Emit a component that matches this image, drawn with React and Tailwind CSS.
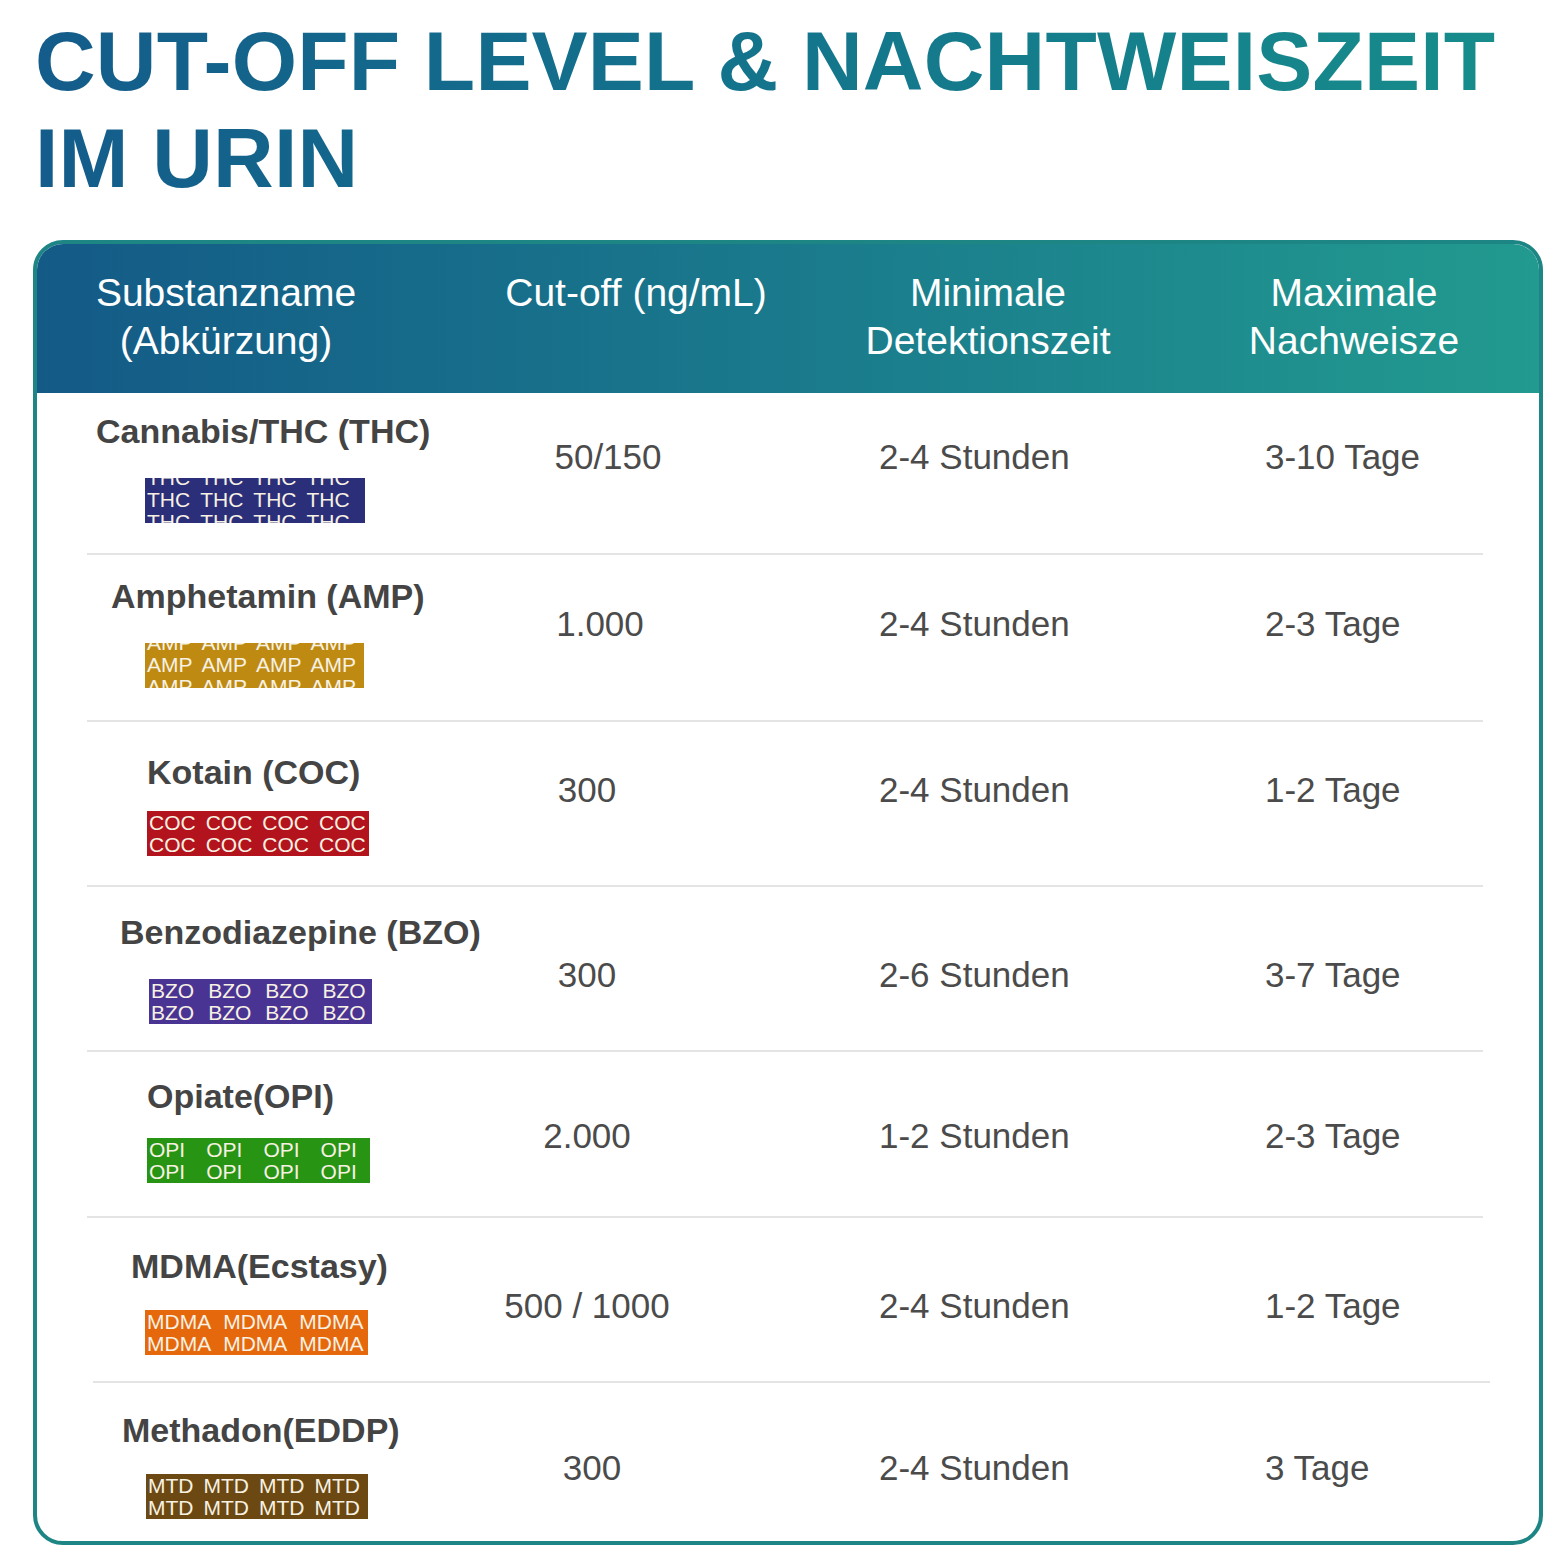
import React from "react";

const rows = [
  {
    name: "Cannabis/THC (THC)", code: "THC", bg: "bg-[#2b2f7a]", clip: true, gap: "gap-x-[10px]", count: 4,
    cut: "50/150", min: "2-4 Stunden", max: "3-10 Tage", cutCls: "pl-[32px]",
    h: "h-[160px]", lp: "pt-[18px]", lm: "ml-[59px]", bm: "mt-[27px] ml-[108px] w-[220px]", vp: "pt-[44px]",
  },
  {
    name: "Amphetamin (AMP)", code: "AMP", bg: "bg-[#bf8a12]", clip: true, gap: "gap-x-[9px]", count: 4,
    cut: "1.000", min: "2-4 Stunden", max: "2-3 Tage", cutCls: "pl-[16px]",
    h: "h-[165px]", lp: "pt-[21px]", lm: "ml-[74px]", bm: "mt-[27px] ml-[108px] w-[219px]", vp: "pt-[49px]",
  },
  {
    name: "Kotain (COC)", code: "COC", bg: "bg-[#b3131c]", clip: false, gap: "gap-x-[10px]", count: 4,
    cut: "300", min: "2-4 Stunden", max: "1-2 Tage", cutCls: "pr-[10px]",
    h: "h-[163px]", lp: "pt-[30px]", lm: "ml-[110px]", bm: "mt-[19px] ml-[110px] w-[222px]", vp: "pt-[48px]",
  },
  {
    name: "Benzodiazepine (BZO)", code: "BZO", bg: "bg-[#4a3493]", clip: false, gap: "gap-x-[14px]", count: 4,
    cut: "300", min: "2-6 Stunden", max: "3-7 Tage", cutCls: "pr-[10px]",
    h: "h-[163px]", lp: "pt-[25px]", lm: "ml-[83px]", bm: "mt-[27px] ml-[112px] w-[223px]", vp: "pt-[68px]",
  },
  {
    name: "Opiate(OPI)", code: "OPI", bg: "bg-[#289414]", clip: false, gap: "gap-x-[21px]", count: 4,
    cut: "2.000", min: "1-2 Stunden", max: "2-3 Tage", cutCls: "pr-[10px]",
    h: "h-[164px]", lp: "pt-[24px]", lm: "ml-[110px]", bm: "mt-[22px] ml-[110px] w-[223px]", vp: "pt-[64px]",
  },
  {
    name: "MDMA(Ecstasy)", code: "MDMA", bg: "bg-[#e6680d]", clip: false, gap: "gap-x-[12px]", count: 3,
    cut: "500 / 1000", min: "2-4 Stunden", max: "1-2 Tage", cutCls: "pr-[10px]",
    h: "h-[163px]", lp: "pt-[28px]", lm: "ml-[94px]", bm: "mt-[24px] ml-[108px] w-[223px]", vp: "pt-[68px]",
  },
  {
    name: "Methadon(EDDP)", code: "MTD", bg: "bg-[#6c4912]", clip: false, gap: "gap-x-[10px]", count: 4,
    cut: "300", min: "2-4 Stunden", max: "3 Tage", cutCls: "",
    h: "h-[158px]", lp: "pt-[27px]", lm: "ml-[85px]", bm: "mt-[24px] ml-[109px] w-[222px]", vp: "pt-[65px]",
  },
];

const seps = ["ml-[50px] mr-[56px]", "ml-[50px] mr-[56px]", "ml-[50px] mr-[56px]", "ml-[50px] mr-[56px]", "ml-[50px] mr-[56px]", "ml-[56px] mr-[49px]"];

function Badge({ r }) {
  const lines = r.clip ? 3 : 2;
  const words = Array.from({ length: r.count }, () => r.code);
  return (
    <div className={`${r.bg} ${r.bm} h-[45px] overflow-hidden`}>
      <div className={r.clip ? "-mt-[11px]" : "pt-[1px]"}>
        {Array.from({ length: lines }).map((_, i) => (
          <div key={i} className={`flex ${r.gap} pl-[2px] whitespace-nowrap text-[21px] leading-[22px] text-[#f7f1e3]`}>
            {words.map((w, j) => (
              <span key={j}>{w}</span>
            ))}
          </div>
        ))}
      </div>
    </div>
  );
}

export default function App() {
  return (
    <div className="w-[1568px] h-[1568px] bg-white font-['Liberation_Sans',Arial,sans-serif] overflow-hidden">
      <div className="pt-[13px] pl-[35px]">
        <h1 className="w-fit text-[84px] leading-[97px] font-bold tracking-[0.2px] bg-gradient-to-r from-[#145c8b] to-[#178c8b] bg-clip-text text-transparent">
          CUT-OFF LEVEL &amp; NACHTWEISZEIT
          <br />
          IM URIN
        </h1>
      </div>

      <div className="mt-[33px] ml-[33px] w-[1510px] rounded-[30px] border-4 border-[#1e8585] overflow-hidden">
        <div className="h-[149px] grid grid-cols-[378px_442px_312px_370px] items-start pt-[25px] bg-gradient-to-r from-[#145a87] via-[#1a7a8c] to-[#229a8f] text-white text-[39px] leading-[48px] text-center">
          <div>Substanzname<br />(Abkürzung)</div>
          <div>Cut-off (ng/mL)</div>
          <div className="pr-[50px]">Minimale<br />Detektionszeit</div>
          <div>Maximale<br />Nachweisze</div>
        </div>

        <div>
          {rows.map((r, i) => (
            <React.Fragment key={r.code}>
              <div className={`${r.h} grid grid-cols-[450px_210px_568px_1fr] items-start text-[35px] leading-[40px] text-[#4b4b4b]`}>
                <div className={`flex flex-col items-start ${r.lp}`}>
                  <div className={`${r.lm} font-bold text-[34px] leading-[40px] text-[#444] whitespace-nowrap`}>{r.name}</div>
                  <Badge r={r} />
                </div>
                <div className={`${r.vp} ${r.cutCls} text-center whitespace-nowrap`}>{r.cut}</div>
                <div className={`${r.vp} pl-[182px] whitespace-nowrap`}>{r.min}</div>
                <div className={`${r.vp} whitespace-nowrap`}>{r.max}</div>
              </div>
              {i < seps.length && <div className={`h-[2px] bg-[#e4e4e4] ${seps[i]}`} />}
            </React.Fragment>
          ))}
        </div>
      </div>
    </div>
  );
}
